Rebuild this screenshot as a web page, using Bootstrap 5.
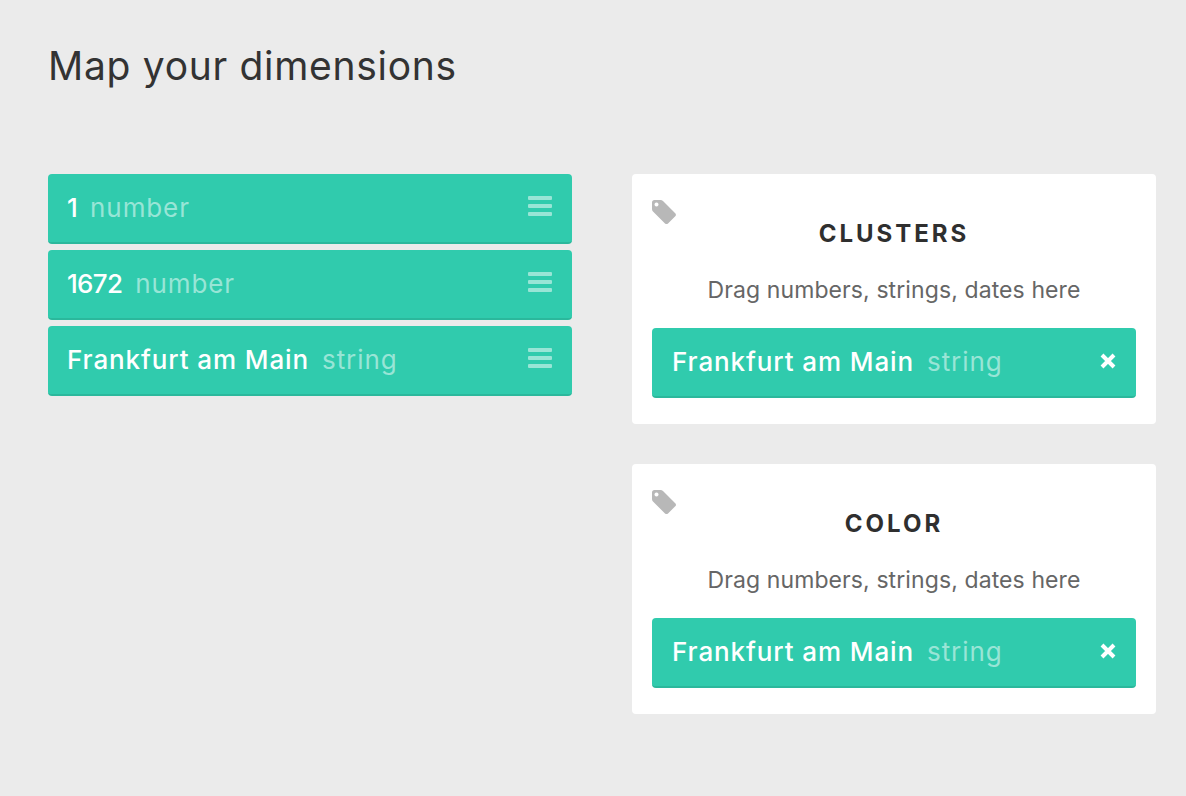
<!DOCTYPE html>
<html lang="en">
<head>
<meta charset="utf-8">
<title>Map your dimensions</title>
<link href="https://cdn.jsdelivr.net/npm/bootstrap@5.3.0/dist/css/bootstrap.min.css" rel="stylesheet">
<style>
html,body{height:100%}
body{background:#ebebeb;font-family:Inter,"Noto Sans",sans-serif;color:#333;overflow:hidden}
.page-wrap{padding:40px 30px 0 48px}
.page-title{font-size:39px;line-height:52px;font-weight:400;letter-spacing:.7px;margin:0 0 82px;color:#333}
.cols{display:grid;grid-template-columns:524px 524px;column-gap:60px}
.dim-list{display:flex;flex-direction:column;gap:6px}
.dim-row{height:70px;background:#30cbad;border-bottom:2px solid #2bb89c;border-radius:4px;color:#fff;font-size:26px;letter-spacing:.9px;display:flex;align-items:center;padding:0 20px 2px 19px}
.dim-name{font-weight:500}
.dim-num{letter-spacing:-.7px}
.dim-type{color:#98e5d6;margin-left:13px}
.burger{margin-left:auto;width:24px;display:flex;flex-direction:column;gap:4px;margin-bottom:2px}
.burger i{display:block;height:4px;border-radius:1px;background:#98e5d6}
.targets{display:flex;flex-direction:column;gap:40px}
.target{position:relative;height:250px;background:#fff;border-radius:4px;padding:45px 20px 0;text-align:center}
.tag-ico{position:absolute;left:19px;top:25px;width:26px;height:26px}
.target-title{font-size:24px;line-height:30px;font-weight:700;letter-spacing:3px;color:#2f2f2f;margin:0}
.target-hint{font-size:23px;line-height:30px;letter-spacing:.1px;color:#666;margin:26px 0 23px}
.chip{height:70px;background:#30cbad;border-bottom:2px solid #2bb89c;border-radius:4px;color:#fff;font-size:26px;letter-spacing:.9px;display:flex;align-items:center;padding:0 20px 2px;text-align:left}
.chip-x{margin-left:auto;width:16px;height:16px}
</style>
</head>
<body>
<div class="page-wrap">
<h1 class="page-title">Map your dimensions</h1>
<div class="cols">
<div class="dim-list">
<div class="dim-row"><span class="dim-name dim-num">1</span><span class="dim-type">number</span><span class="burger"><i></i><i></i><i></i></span></div>
<div class="dim-row"><span class="dim-name dim-num">1672</span><span class="dim-type">number</span><span class="burger"><i></i><i></i><i></i></span></div>
<div class="dim-row"><span class="dim-name">Frankfurt am Main</span><span class="dim-type">string</span><span class="burger"><i></i><i></i><i></i></span></div>
</div>
<div class="targets">
<div class="target">
<svg class="tag-ico" viewBox="0 0 26 26"><path fill="#b8b8b8" fill-rule="evenodd" d="M1 3.500Q1 1 3.500 1H9.500Q11 1 12 2L24.500 14.500Q25.500 16 24.500 17L17 24.500Q15.500 25.500 14 24.500L2 12.500Q1 11.500 1 10ZM5.500 3.500a2 2 0 1 0 .01 0Z"/></svg>
<h2 class="target-title">CLUSTERS</h2>
<p class="target-hint">Drag numbers, strings, dates here</p>
<div class="chip"><span class="dim-name">Frankfurt am Main</span><span class="dim-type">string</span><svg class="chip-x" viewBox="0 0 16 16"><path stroke="#fff" stroke-width="4" d="M2 2L14 14M14 2L2 14"/></svg></div>
</div>
<div class="target">
<svg class="tag-ico" viewBox="0 0 26 26"><path fill="#b8b8b8" fill-rule="evenodd" d="M1 3.500Q1 1 3.500 1H9.500Q11 1 12 2L24.500 14.500Q25.500 16 24.500 17L17 24.500Q15.500 25.500 14 24.500L2 12.500Q1 11.500 1 10ZM5.500 3.500a2 2 0 1 0 .01 0Z"/></svg>
<h2 class="target-title">COLOR</h2>
<p class="target-hint">Drag numbers, strings, dates here</p>
<div class="chip"><span class="dim-name">Frankfurt am Main</span><span class="dim-type">string</span><svg class="chip-x" viewBox="0 0 16 16"><path stroke="#fff" stroke-width="4" d="M2 2L14 14M14 2L2 14"/></svg></div>
</div>
</div>
</div>
</div>
<script src="https://cdn.jsdelivr.net/npm/bootstrap@5.3.0/dist/js/bootstrap.bundle.min.js"></script>
</body>
</html>
